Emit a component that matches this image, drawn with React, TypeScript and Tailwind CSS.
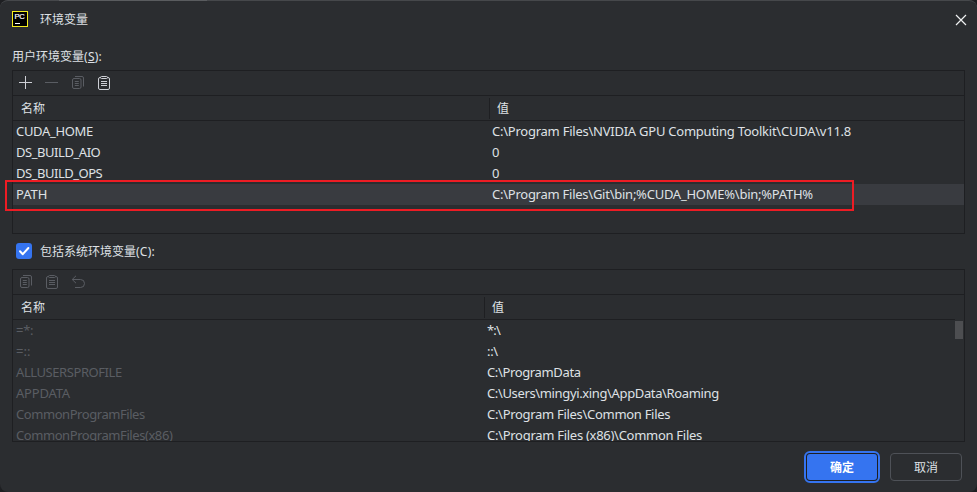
import type { ReactNode } from "react";

type Row = { name: string; value: string; nameTracking?: string; valueTracking?: string; selected?: boolean };

const userVars: Row[] = [
  {
    name: "CUDA_HOME",
    value: "C:\\Program Files\\NVIDIA GPU Computing Toolkit\\CUDA\\v11.8",
    nameTracking: "tracking-[-0.33px]",
    valueTracking: "tracking-[-0.24px]",
  },
  { name: "DS_BUILD_AIO", value: "0", nameTracking: "tracking-[-0.45px]" },
  { name: "DS_BUILD_OPS", value: "0", nameTracking: "tracking-[-0.48px]" },
  {
    name: "PATH",
    value: "C:\\Program Files\\Git\\bin;%CUDA_HOME%\\bin;%PATH%",
    valueTracking: "tracking-[-0.25px]",
    selected: true,
  },
];

const systemVars: Row[] = [
  { name: "=*:", value: "*:\\", nameTracking: "tracking-[-0.3px]", valueTracking: "tracking-[-0.8px]" },
  { name: "=::", value: "::\\", valueTracking: "tracking-[-0.3px]" },
  { name: "ALLUSERSPROFILE", value: "C:\\ProgramData", nameTracking: "tracking-[-0.43px]", valueTracking: "tracking-[-0.36px]" },
  { name: "APPDATA", value: "C:\\Users\\mingyi.xing\\AppData\\Roaming", nameTracking: "tracking-[-0.2px]", valueTracking: "tracking-[-0.36px]" },
  { name: "CommonProgramFiles", value: "C:\\Program Files\\Common Files", nameTracking: "tracking-[-0.44px]", valueTracking: "tracking-[-0.3px]" },
  { name: "CommonProgramFiles(x86)", value: "C:\\Program Files (x86)\\Common Files", nameTracking: "tracking-[-0.43px]", valueTracking: "tracking-[-0.28px]" },
];

function Icon({ children, className = "" }: { children: ReactNode; className?: string }) {
  return (
    <svg width="16" height="16" viewBox="0 0 16 16" fill="none" stroke="currentColor" className={`shrink-0 ${className}`}>
      {children}
    </svg>
  );
}

function CopyIcon() {
  return (
    <Icon className="text-[#5a5d63]">
      <rect x="2.5" y="3.5" width="8.5" height="10" rx="1.5" />
      <path d="M5 1.5h7A1.5 1.5 0 0 1 13.5 3v8.5M4.8 6.5h4M4.8 8.5h4M4.8 10.5h4" />
    </Icon>
  );
}

function PasteIcon({ className }: { className: string }) {
  return (
    <Icon className={className}>
      <rect x="2.5" y="2.5" width="11" height="12" rx="1.5" />
      <rect x="4.5" y="1.5" width="7" height="2" rx="1" className="fill-[#2b2d30]" />
      <path d="M5 6.5h6M5 8.5h6M5 10.5h6" />
    </Icon>
  );
}

function HeaderRow({ first, rest }: { first: string; rest: string }) {
  return (
    <div className="flex h-6 shrink-0 items-center text-xs">
      <div className={`pl-2 pt-[2px] ${first}`}>名称</div>
      <div className={`flex h-[21px] items-center border-l border-[#1e1f22] pt-[2px] ${rest}`}>值</div>
    </div>
  );
}

function Rows({ rows, first, dim }: { rows: Row[]; first: string; dim?: boolean }) {
  return (
    <div className="min-w-0 grow overflow-hidden">
      {rows.map((r) => (
        <div
          key={r.name}
          className={`flex h-[21px] items-center whitespace-pre text-[13px] leading-[21px] ${r.selected ? "bg-[#393b40]" : ""}`}
        >
          <div className={`shrink-0 pl-[3px] ${first} ${dim ? "text-[#5a5d63]" : ""}`}>
            <span className={r.nameTracking}>{r.name}</span>
          </div>
          <span className={r.valueTracking}>{r.value}</span>
        </div>
      ))}
    </div>
  );
}

export default function App() {
  return (
    <div className="h-[492px] w-[977px] overflow-hidden bg-[#1e1f22] font-['Noto_Sans','Noto_Sans_CJK_SC',sans-serif] text-[#dfe1e5]">
      <div className="relative flex h-full flex-col rounded-lg border-t border-[#46484b] bg-[#2b2d30] pl-3 pr-3">
        <div className="flex h-[37px] shrink-0 items-center">
          <svg width="16" height="16" viewBox="0 0 16 16" className="mb-px">
            <rect x="0.5" y="0.5" width="15" height="15" fill="#000" stroke="#f5ee1e" />
            <text x="2.4" y="8" fill="#fff" stroke="#fff" strokeWidth="0.2" fontSize="7.6" textLength="10.4" fontFamily="Liberation Sans, sans-serif">PC</text>
            <rect x="3" y="12" width="5" height="1" fill="#fff" />
          </svg>
          <h1 className="ml-3 text-xs">环境变量</h1>
          <svg width="12" height="12" viewBox="0 0 12 12" className="ml-auto mr-[-2px] mt-px" stroke="#f0f1f2" strokeWidth="1.2">
            <path d="M1 1l10 10M11 1L1 11" />
          </svg>
        </div>
        <div className="flex h-8 shrink-0 items-end pb-[3px] text-xs leading-[20px]">
          用户环境变量<span className="tracking-[0.25px]">(<span className="underline">S</span>):</span>
        </div>

        <section className="flex h-[164px] w-[953px] shrink-0 flex-col border border-[#1e1f22]">
          <div className="flex h-6 shrink-0 items-center gap-[10px] pl-[5px]">
            <Icon className="text-[#ced0d6]"><path d="M7.5 1v13M1 7.5h13" /></Icon>
            <Icon className="text-[#5a5d63]"><path d="M1 7.5h13" /></Icon>
            <CopyIcon />
            <PasteIcon className="text-[#ced0d6]" />
          </div>
          <div className="h-px shrink-0 bg-[#1e1f22]" />
          <HeaderRow first="w-[476px]" rest="pl-[7px]" />
          <div className="h-px shrink-0 bg-[#1e1f22]" />
          <Rows rows={userVars} first="w-[479px]" />
        </section>

        <label className="flex h-[35px] shrink-0 items-center pl-1 text-xs">
          <span className="mb-px flex size-4 items-center justify-center rounded-[3px] bg-[#3574f0]">
            <svg width="16" height="16" viewBox="0 0 16 16" fill="none" stroke="#fff" strokeWidth="2" strokeLinecap="round" strokeLinejoin="round">
              <path d="M4 8.3l2.8 2.9L12.4 5" />
            </svg>
          </span>
          <span className="ml-2">包括系统环境变量<span className="tracking-[0.25px]">(C):</span></span>
        </label>

        <section className="flex h-[173px] w-[953px] shrink-0 flex-col border border-[#1e1f22]">
          <div className="flex h-6 shrink-0 items-center gap-[10px] pl-[5px]">
            <CopyIcon />
            <PasteIcon className="text-[#5a5d63]" />
            <Icon className="text-[#5a5d63]"><path d="M6 1.8L2.2 5.5L6 9.2M2.5 5.5h8a4 4 0 0 1 0 8H5" /></Icon>
          </div>
          <div className="h-px shrink-0 bg-[#1e1f22]" />
          <HeaderRow first="w-[471px]" rest="pl-[7px]" />
          <div className="mr-[9px] h-px shrink-0 bg-[#1e1f22]" />
          <div className="flex min-h-0 grow">
            <Rows rows={systemVars} first="w-[474px]" dim />
            <div className="mr-px mt-px h-[18px] w-2 bg-[#4d4e51]" />
          </div>
        </section>

        <div className="flex h-[50px] shrink-0 items-center justify-end gap-[10px] pr-[3px] text-xs">
          <button className="flex h-8 w-[76px] items-center justify-center rounded-[6px] border-2 border-[#3574f0] bg-[#1e1f22] p-px text-white">
            <span className="flex h-full w-full items-center justify-center rounded-[3px] bg-[#3574f0] pt-[2px] font-bold">确定</span>
          </button>
          <button className="h-7 w-[72px] rounded-[4px] border border-[#4e5157] pt-[2px]">取消</button>
        </div>

        <div className="pointer-events-none absolute left-[59px] top-[-1px] h-px w-[148px] bg-[#5a5c5f]" />
        <div className="pointer-events-none absolute left-[5px] top-[179px] h-[31px] w-[849px] border-2 border-[#ed1c24]" />
      </div>
    </div>
  );
}
